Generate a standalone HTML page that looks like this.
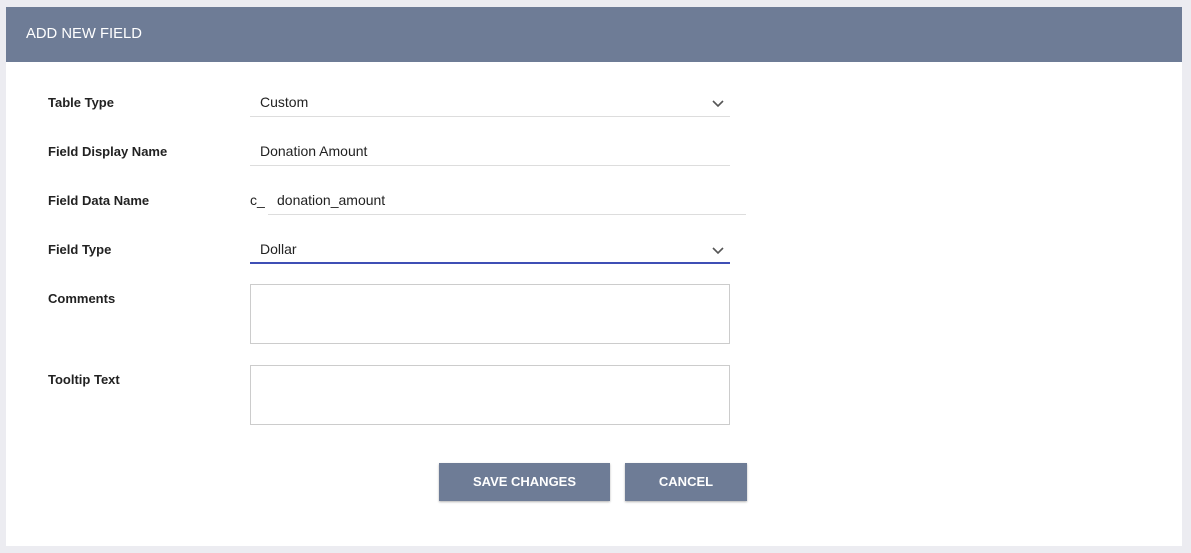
<!DOCTYPE html><html><head><style>
body{margin:0;width:1191px;height:553px;background:#ececf1;font-family:"Liberation Sans",Arial,sans-serif;position:relative;overflow:hidden}
.card{position:absolute;left:6px;top:7px;width:1176px;height:539px;background:#fff}
.hdr{position:absolute;left:6px;top:7px;width:1176px;height:55px;background:#6e7c96;color:#fff;font-size:14.8px;line-height:55px;text-indent:20px}
.l{position:absolute;left:48px;font-size:13px;font-weight:bold;color:#222}
.t{position:absolute;font-size:14px;color:#222}
.u{position:absolute;height:1px;background:#ddd}
.box{position:absolute;left:250px;width:478px;height:58px;border:1px solid #ccc}
.btn{position:absolute;top:463px;height:38px;background:#6e7c96;color:#fff;font-size:13px;font-weight:bold;text-align:center;line-height:38px;box-shadow:0 1px 2px rgba(0,0,0,.3)}
svg{position:absolute}
</style></head><body>
<div class="card"></div>
<div class="hdr">ADD NEW FIELD</div>
<div class="l" style="top:95px">Table Type</div>
<div class="t" style="left:260px;top:94px">Custom</div>
<div class="u" style="left:250px;top:116px;width:480px"></div>
<svg style="left:711px;top:99px" width="14" height="10"><path d="M2 2l5 5 5-5" stroke="#555" stroke-width="1.6" fill="none"/></svg>
<div class="l" style="top:144px">Field Display Name</div>
<div class="t" style="left:260px;top:143px">Donation Amount</div>
<div class="u" style="left:250px;top:165px;width:480px"></div>
<div class="l" style="top:193px">Field Data Name</div>
<div class="t" style="left:250px;top:192px">c_</div>
<div class="t" style="left:277px;top:192px">donation_amount</div>
<div class="u" style="left:268px;top:214px;width:478px"></div>
<div class="l" style="top:242px">Field Type</div>
<div class="t" style="left:260px;top:241px">Dollar</div>
<div class="u" style="left:250px;top:262px;width:480px;height:2px;background:#3f4fb5"></div>
<svg style="left:711px;top:246px" width="14" height="10"><path d="M2 2l5 5 5-5" stroke="#555" stroke-width="1.6" fill="none"/></svg>
<div class="l" style="top:291px">Comments</div>
<div class="box" style="top:284px"></div>
<div class="l" style="top:372px">Tooltip Text</div>
<div class="box" style="top:365px"></div>
<div class="btn" style="left:439px;width:171px">SAVE CHANGES</div>
<div class="btn" style="left:625px;width:122px">CANCEL</div>
</body></html>
